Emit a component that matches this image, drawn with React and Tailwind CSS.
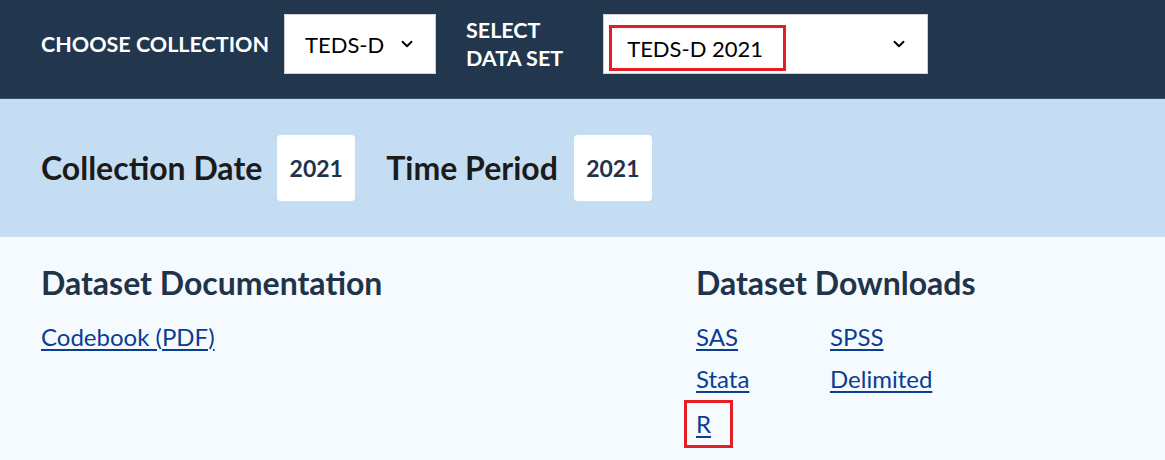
import { ChevronDown } from 'lucide-react'

const font = { fontFamily: 'Lato, "Noto Sans", sans-serif' }

function Select({ value, width, boxed }) {
  return (
    <div className={`h-[60px] bg-white border border-[#d0d0d0] flex items-center justify-between pl-[20px] pr-[19px] ${width}`}>
      {boxed ? (
        <span className="border-[3px] border-[#e51d25] -ml-[15px] mt-[8px] pl-[15px] h-[46px] w-[177px] whitespace-nowrap flex items-center text-[22px] text-black">{value}</span>
      ) : (
        <span className="text-[22px] text-black">{value}</span>
      )}
      <ChevronDown size={18} strokeWidth={2.5} className="text-black" />
    </div>
  )
}

export default function App() {
  return (
    <div className="w-[1165px] h-[460px] overflow-hidden bg-[#f5faff]" style={font}>
      {/* collection picker */}
      <div className="h-[99px] bg-[#22374e] border-b border-[#3a5068] flex items-start pt-[14px] pl-[41px]">
        <span className="h-[60px] flex items-center text-white font-bold text-[21.5px] uppercase mr-[15px]">Choose Collection</span>
        <Select value="TEDS-D" width="w-[152px]" />
        <span className="h-[60px] flex items-center text-white font-bold text-[21.5px] uppercase leading-[28px] ml-[30px] mr-[40px]">
          Select<br />Data Set
        </span>
        <Select value="TEDS-D 2021" width="w-[325px]" boxed />
      </div>

      {/* dates */}
      <div className="h-[138px] bg-[#c5ddf2] flex items-center pl-[41px]">
        <span className="text-[32px] font-bold text-[#1b1b1b]">Collection Date</span>
        <span className="ml-[15px] w-[78px] h-[66px] bg-white rounded-[4px] flex items-center justify-center text-[23px] font-bold text-[#1f3349]">2021</span>
        <span className="ml-[31px] text-[32px] font-bold text-[#1b1b1b]">Time Period</span>
        <span className="ml-[16px] w-[78px] h-[66px] bg-white rounded-[4px] flex items-center justify-center text-[23px] font-bold text-[#1f3349]">2021</span>
      </div>

      {/* documentation / downloads */}
      <div className="grid grid-cols-[655px_1fr] pl-[41px] pt-[26px]">
        <div>
          <h2 className="text-[32px] font-bold text-[#1f3349] leading-[40px]">Dataset Documentation</h2>
          <a href="#" className="block mt-[20px] text-[24px] text-[#0b3d91] underline underline-offset-[3px] leading-[28px] w-fit">Codebook (PDF)</a>
        </div>
        <div>
          <h2 className="text-[32px] font-bold text-[#1f3349] leading-[40px]">Dataset Downloads</h2>
          <div className="grid grid-cols-[134px_1fr] mt-[20px] gap-y-[14px] text-[24px] leading-[28px]">
            <a href="#" className="text-[#0b3d91] underline underline-offset-[3px] w-fit">SAS</a>
            <a href="#" className="text-[#0b3d91] underline underline-offset-[3px] w-fit">SPSS</a>
            <a href="#" className="text-[#0b3d91] underline underline-offset-[3px] w-fit">Stata</a>
            <a href="#" className="text-[#0b3d91] underline underline-offset-[3px] w-fit">Delimited</a>
            <span className="-ml-[12px] -mt-[7px] w-[49px] h-[48px] border-[3px] border-[#e51d25] flex items-center pl-[9px]">
              <a href="#" className="text-[#0b3d91] underline underline-offset-[3px]">R</a>
            </span>
          </div>
        </div>
      </div>
    </div>
  )
}
